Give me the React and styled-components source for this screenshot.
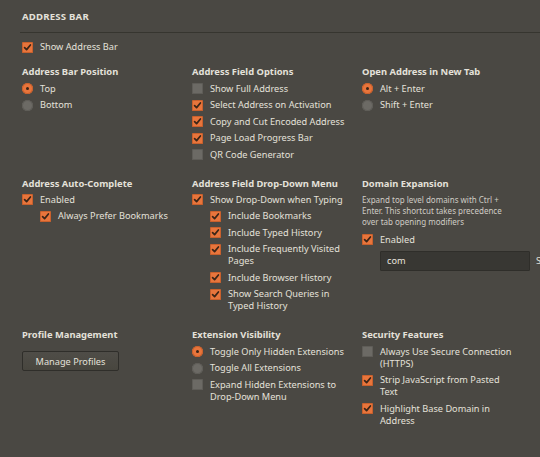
import React from "react";
import styled, { createGlobalStyle } from "styled-components";

const Global = createGlobalStyle`
  html, body { margin: 0; padding: 0; background: #4a4843; }
  * { box-sizing: border-box; }
`;

const Page = styled.div`
  width: 540px;
  height: 457px;
  overflow: hidden;
  background: #4a4843;
  padding: 10px 0 0 20px;
  font-family: "Noto Sans", "Open Sans", sans-serif;
  font-size: 9.2px;
  color: #e4e1da;
`;

const Title = styled.div`
  padding: 0 0 8px 2px;
  line-height: 14px;
  font-size: 9.6px;
  font-weight: 700;
  letter-spacing: 0.2px;
  text-transform: uppercase;
  border-bottom: 1px solid #36352f;
`;

const TopOption = styled.div`
  margin-top: 6px;
  padding-left: 2px;
`;

const Grid = styled.div`
  display: grid;
  grid-template-columns: 170px 170px 170px;
  row-gap: 14.75px;
  margin-top: 10.75px;
  padding-left: 2px;
`;

const Section = styled.div`
  display: flex;
  flex-direction: column;
  padding-right: ${(p) => p.$pad ?? 6}px;
`;

const Heading = styled.div`
  font-weight: 700;
  font-size: 9.4px;
  line-height: 12px;
  margin-bottom: 2px;
`;

const Row = styled.label`
  display: flex;
  align-items: flex-start;
  gap: 7px;
  padding: 2.25px 0 2.25px ${(p) => (p.$indent ? 18 : 0)}px;
  line-height: 12px;
`;

const Box = styled.span`
  flex: none;
  width: 11px;
  height: 11px;
  margin-top: 0.5px;
  border-radius: 1.5px;
  background: ${(p) => (p.$on ? "#e8753c" : "#6c6a65")};
  box-shadow: inset 0 0 0 1px ${(p) => (p.$on ? "#c9602c" : "#5f5d58")};
  display: flex;
  align-items: center;
  justify-content: center;
`;

const Radio = styled.span`
  flex: none;
  width: 11px;
  height: 11px;
  margin-top: 0.5px;
  border-radius: 50%;
  background: ${(p) => (p.$on ? "#e8753c" : "#6c6a65")};
  box-shadow: inset 0 0 0 1px ${(p) => (p.$on ? "#c9602c" : "#5f5d58")};
  display: flex;
  align-items: center;
  justify-content: center;
  &::after {
    content: "";
    display: ${(p) => (p.$on ? "block" : "none")};
    width: 3.5px;
    height: 3.5px;
    border-radius: 50%;
    background: #3a2518;
  }
`;

const Desc = styled.div`
  font-size: 8px;
  line-height: 11px;
  color: #cfccc5;
  margin-top: 2px;
  margin-bottom: 5px;
`;

const InputRow = styled.div`
  display: flex;
  align-items: center;
  margin-top: 2.5px;
  padding-left: 18px;
  width: 200px;
`;

const TextInput = styled.div`
  flex: none;
  width: 150px;
  height: 20px;
  background: #383733;
  border: 1px solid #2f2e2a;
  border-radius: 1px;
  padding: 0 6px;
  line-height: 18px;
  color: #e8e5de;
`;

const Suffix = styled.span`
  margin-left: 6px;
  white-space: nowrap;
`;

const Button = styled.div`
  margin-top: 8px;
  width: 97px;
  height: 20px;
  border: 1px solid #2f2e2a;
  border-radius: 2px;
  background: linear-gradient(#4f4d48, #48463f);
  display: flex;
  align-items: center;
  justify-content: center;
  color: #e4e1da;
`;

function Check() {
  return (
    <svg width="9" height="9" viewBox="0 0 9 9">
      <path d="M1.6 4.6 L3.6 6.6 L7.4 2" fill="none" stroke="#3b2517" strokeWidth="1.7" strokeLinecap="round" strokeLinejoin="round" />
    </svg>
  );
}

function CheckOption({ on, indent, children }) {
  return (
    <Row $indent={indent}>
      <Box $on={on}>{on && <Check />}</Box>
      <span>{children}</span>
    </Row>
  );
}

function RadioOption({ on, children }) {
  return (
    <Row>
      <Radio $on={on} />
      <span>{children}</span>
    </Row>
  );
}

export default function App() {
  return (
    <Page>
      <Global />
      <Title>Address Bar</Title>
      <TopOption>
        <CheckOption on>Show Address Bar</CheckOption>
      </TopOption>
      <Grid>
        <Section>
          <Heading>Address Bar Position</Heading>
          <RadioOption on>Top</RadioOption>
          <RadioOption>Bottom</RadioOption>
        </Section>
        <Section>
          <Heading>Address Field Options</Heading>
          <CheckOption>Show Full Address</CheckOption>
          <CheckOption on>Select Address on Activation</CheckOption>
          <CheckOption on>Copy and Cut Encoded Address</CheckOption>
          <CheckOption on>Page Load Progress Bar</CheckOption>
          <CheckOption>QR Code Generator</CheckOption>
        </Section>
        <Section $pad={18}>
          <Heading>Open Address in New Tab</Heading>
          <RadioOption on>Alt + Enter</RadioOption>
          <RadioOption>Shift + Enter</RadioOption>
        </Section>

        <Section>
          <Heading>Address Auto-Complete</Heading>
          <CheckOption on>Enabled</CheckOption>
          <CheckOption on indent>Always Prefer Bookmarks</CheckOption>
        </Section>
        <Section>
          <Heading>Address Field Drop-Down Menu</Heading>
          <CheckOption on>Show Drop-Down when Typing</CheckOption>
          <CheckOption on indent>Include Bookmarks</CheckOption>
          <CheckOption on indent>Include Typed History</CheckOption>
          <CheckOption on indent>Include Frequently Visited Pages</CheckOption>
          <CheckOption on indent>Include Browser History</CheckOption>
          <CheckOption on indent>Show Search Queries in Typed History</CheckOption>
        </Section>
        <Section $pad={18}>
          <Heading>Domain Expansion</Heading>
          <Desc>
            Expand top level domains with Ctrl + Enter. This shortcut takes precedence over tab opening modifiers
          </Desc>
          <CheckOption on>Enabled</CheckOption>
          <InputRow>
            <TextInput>com</TextInput>
            <Suffix>Suffix</Suffix>
          </InputRow>
        </Section>

        <Section>
          <Heading>Profile Management</Heading>
          <Button>Manage Profiles</Button>
        </Section>
        <Section>
          <Heading>Extension Visibility</Heading>
          <RadioOption on>Toggle Only Hidden Extensions</RadioOption>
          <RadioOption>Toggle All Extensions</RadioOption>
          <CheckOption>Expand Hidden Extensions to Drop-Down Menu</CheckOption>
        </Section>
        <Section $pad={18}>
          <Heading>Security Features</Heading>
          <CheckOption>Always Use Secure Connection (HTTPS)</CheckOption>
          <CheckOption on>Strip JavaScript from Pasted Text</CheckOption>
          <CheckOption on>Highlight Base Domain in Address</CheckOption>
        </Section>
      </Grid>
    </Page>
  );
}
